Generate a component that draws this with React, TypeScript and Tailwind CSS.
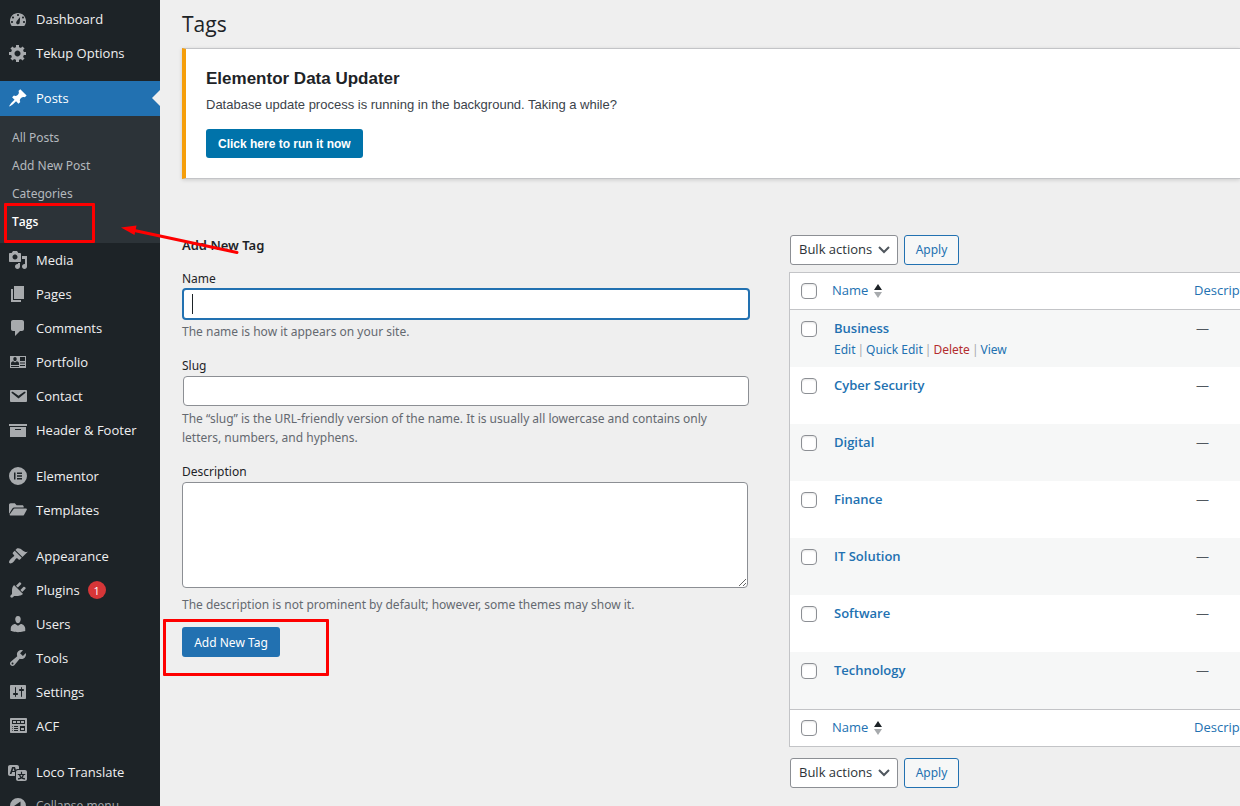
import type { ReactNode } from "react";

const icons: Record<string, ReactNode> = {
  dashboard: (
    <path fillRule="evenodd" d="M3.76 17h12.48c1.1-1.37 1.76-3.11 1.76-5 0-4.42-3.58-8-8-8s-8 3.58-8 8c0 1.89.66 3.63 1.76 5zM9 6c0-.55.45-1 1-1s1 .45 1 1c0 .56-.45 1-1 1s-1-.44-1-1zM4 8.500c0-.55.45-1 1-1s1 .45 1 1c0 .56-.45 1-1 1s-1-.44-1-1zm10 0c0-.55.45-1 1-1s1 .45 1 1c0 .56-.45 1-1 1s-1-.44-1-1zM8.700 12.200c.6-.6 3.400-4.200 3.400-4.200s-.1 5.200-.5 6.200c-.5 1.100-1.800 1.500-2.700.9-.9-.6-1-2-.2-2.900zM3 13c0-.55.45-1 1-1s1 .45 1 1c0 .56-.45 1-1 1s-1-.44-1-1zm12 0c0-.55.45-1 1-1s1 .45 1 1c0 .56-.45 1-1 1s-1-.44-1-1z" />
  ),
  options: (
    <path fillRule="evenodd" d="M18 12h-2.18c-.17.7-.44 1.35-.81 1.93l1.54 1.54-2.1 2.1-1.54-1.54c-.58.36-1.23.63-1.91.79V19H8v-2.18c-.68-.16-1.33-.43-1.91-.79l-1.54 1.54-2.12-2.12 1.54-1.54c-.36-.58-.63-1.23-.79-1.91H1V9.03h2.17c.16-.7.44-1.35.8-1.94L2.43 5.55l2.1-2.1 1.54 1.54c.58-.37 1.24-.64 1.93-.81V2h3v2.18c.68.16 1.33.43 1.91.79l1.54-1.54 2.12 2.12-1.54 1.54c.36.59.64 1.24.8 1.94H18V12zm-8.5 1.5c1.66 0 3-1.34 3-3s-1.34-3-3-3-3 1.34-3 3 1.34 3 3 3z" />
  ),
  posts: (
    <path d="M10.44 3.02l1.82-1.82 6.36 6.35-1.83 1.82c-1.05-.68-2.48-.57-3.41.36l-.75.75c-.92.93-1.04 2.35-.35 3.41l-1.83 1.82-2.41-2.41-2.8 2.79c-.42.42-3.38 2.71-3.8 2.29s1.86-3.39 2.28-3.81l2.79-2.79L4.1 9.36l1.83-1.82c1.05.69 2.48.57 3.4-.36l.75-.75c.93-.92 1.05-2.35.36-3.41z" />
  ),
  media: (
    <path fillRule="evenodd" d="M13 11V4c0-.55-.45-1-1-1h-1.67L9 1H5L3.67 3H2c-.55 0-1 .45-1 1v7c0 .55.45 1 1 1h10c.55 0 1-.45 1-1zM7 4.5c1.38 0 2.5 1.12 2.5 2.5S8.38 9.5 7 9.5 4.5 8.38 4.5 7 5.62 4.5 7 4.5zM14 6h5v10.5c0 1.38-1.12 2.5-2.5 2.5S14 17.88 14 16.5s1.12-2.5 2.5-2.5c.17 0 .34.02.5.05V9h-3V6zm-4 8.05V13h2v3.5c0 1.38-1.12 2.5-2.5 2.5S7 17.88 7 16.5 8.12 14 9.5 14c.17 0 .34.02.5.05z" />
  ),
  pages: <path d="M6 15V2h10v13H6zm-1 1h8v2H3V5h2v11z" />,
  comments: (
    <path d="M5 2h9c1.1 0 2 .9 2 2v7c0 1.1-.9 2-2 2h-2l-5 5v-5H5c-1.1 0-2-.9-2-2V4c0-1.1.9-2 2-2z" />
  ),
  portfolio: (
    <path fillRule="evenodd" d="M2 4h16v12H2V4zm10 1v4h5V5h-5zM7 5C5.900 5 5.300 5.900 5.300 6.900S6 9 7 9s1.700-1.100 1.700-2.100S8.100 5 7 5zM3 13h8v-1.500c0-1.200-1-2.200-2.200-2.200L7 10.600 5.200 9.300C4 9.300 3 10.300 3 11.500V13zm9-2.500v1h5v-1h-5zm0 2.500v1h5v-1h-5zM3 14v1h8v-1H3z" />
  ),
  contact: (
    <path fillRule="evenodd" d="M2.900 4h15.200c.6 0 .9.300.9.900v10.200c0 .6-.3.900-.9.900H2.900c-.6 0-.9-.3-.9-.9V4.900c0-.6.300-.9.900-.9zm7.600 8.600l6.740-5.530c.24-.2.430-.66.130-1.070-.29-.41-.82-.42-1.170-.17l-5.700 3.860L4.800 5.830c-.35-.25-.88-.24-1.170.17-.3.410-.11.870.13 1.070z" />
  ),
  header: <path fillRule="evenodd" d="M19 4v2H1V4h18zM2 7h16v10H2V7zm11 3V9H7v1h6z" />,
  elementor: (
    <path fillRule="evenodd" d="M10 1a9 9 0 1 0 0 18 9 9 0 0 0 0-18zM6 6.500h1.500v7H6v-7zM9 6.500h5V8H9V6.500zm0 2.750h5v1.500H9v-1.500zM9 12h5v1.500H9V12z" />
  ),
  templates: (
    <path d="M1 14V5c0-1 .6-1.700 1.600-1.700h4.200L8.600 5.200h5.600c.9 0 1.500.6 1.500 1.500v.8H6.400c-1 0-1.700.4-2.200 1.200L1 14zm4.300-4.600c.3-.5.700-.8 1.300-.8H18c.8 0 1.100.6.8 1.200l-2.700 4.900c-.3.600-.8.900-1.400.9H2.400c-.7 0-1-.6-.7-1.200l3.600-5z" />
  ),
  appearance: (
    <path d="M14.480 11.060L7.410 3.990l1.500-1.500c.5-.56 2.300-.47 3.510.32 1.210.8 1.430 1.280 2.910 2.100 1.180.64 2.450 1.260 4.450.85zm-.71.71L6.700 4.700 4.930 6.470c-.39.39-.39 1.020 0 1.410l1.060 1.060c.39.39.39 1.030 0 1.420-.6.600-1.430 1.110-2.210 1.690-.35.26-.7.530-1.010.84C1.430 14.230.4 16.080 1.400 17.070c.99 1 2.840-.03 4.180-1.360.31-.31.580-.66.850-1.020.57-.78 1.080-1.610 1.690-2.210.39-.39 1.020-.39 1.410 0l1.060 1.060c.39.39 1.020.39 1.410 0z" />
  ),
  plugins: (
    <path d="M13.110 4.360L9.870 7.600 8 5.730l3.240-3.240c.35-.34 1.050-.2 1.560.32.52.51.66 1.210.31 1.550zm-8 1.770l.91-1.120 9.010 9.010-1.190.84c-.71.71-2.630 1.160-3.820 1.160H6.140L4.900 17.260c-.59.59-1.540.59-2.120 0-.59-.58-.59-1.530 0-2.120l1.240-1.240v-3.880c0-1.130.4-3.190 1.090-3.890zm7.260 3.970l3.240-3.240c.34-.35 1.040-.21 1.550.31.52.51.66 1.210.31 1.550l-3.240 3.250z" />
  ),
  users: (
    <path d="M10 9.250c-2.270 0-2.730-3.440-2.730-3.440C7 4.020 7.820 2 9.970 2c2.160 0 2.980 2.020 2.710 3.810 0 0-.41 3.440-2.680 3.440zm0 2.570L12.720 10c2.390 0 4.520 2.330 4.520 4.530v2.490s-3.650 1.130-7.240 1.130c-3.650 0-7.240-1.130-7.240-1.130v-2.490c0-2.250 1.940-4.480 4.470-4.480z" />
  ),
  tools: (
    <path fillRule="evenodd" d="M16.680 9.770c-1.340 1.340-3.300 1.670-4.950.99l-5.410 6.520c-.99.99-2.590.99-3.580 0s-.99-2.590 0-3.570l6.520-5.420c-.68-1.650-.35-3.610.99-4.950 1.280-1.280 3.120-1.620 4.720-1.060l-2.890 2.890 2.820 2.820 2.860-2.870c.53 1.580.18 3.390-1.080 4.650zM3.810 16.210c.4.39 1.040.39 1.430 0 .4-.4.4-1.040 0-1.430-.39-.4-1.030-.4-1.430 0-.39.39-.39 1.030 0 1.430z" />
  ),
  settings: (
    <path fillRule="evenodd" d="M18 16V4c0-.55-.45-1-1-1H3c-.55 0-1 .45-1 1v12c0 .55.45 1 1 1h14c.55 0 1-.45 1-1zM8 11h1c.55 0 1 .45 1 1s-.45 1-1 1H8v1.500c0 .28-.22.5-.5.5s-.5-.22-.5-.5V13H6c-.55 0-1-.45-1-1s.45-1 1-1h1V5.500c0-.28.22-.5.5-.5s.5.220.5.500V11zm5-2h-1c-.55 0-1-.45-1-1s.45-1 1-1h1V5.500c0-.28.22-.5.5-.5s.5.220.5.500V7h1c.55 0 1 .45 1 1s-.45 1-1 1h-1v5.500c0 .28-.22.5-.5.5s-.5-.22-.5-.5V9z" />
  ),
  acf: (
    <path fillRule="evenodd" d="M19 16V3c0-.55-.45-1-1-1H3c-.55 0-1 .45-1 1v13c0 .55.45 1 1 1h15c.55 0 1-.45 1-1zM4 4h13v4H4V4zm1 1v2h3V5H5zm4 0v2h3V5H9zm4 0v2h3V5h-3zm-8.500 5c.28 0 .5.220.5.500s-.22.500-.5.500-.5-.22-.5-.5.220-.5.500-.5zM6 10h4v1H6v-1zm6 0h5v5h-5v-5zm1 2v2h3v-2h-3zm-8.500 0c.28 0 .5.220.5.500s-.22.500-.5.500-.5-.22-.5-.5.220-.5.500-.5zM6 12h4v1H6v-1zm-1.500 2c.28 0 .5.220.5.500s-.22.500-.5.500-.5-.22-.5-.5.220-.5.500-.5zM6 14h4v1H6v-1z" />
  ),
  translate: (
    <path fillRule="evenodd" d="M11 7H9.490c-.63 0-1.250.3-1.590.7L7 5H4.130l-2.390 7h1.690l.74-2H7v4H2c-1.100 0-2-.9-2-2V5c0-1.100.9-2 2-2h7c1.100 0 2 .9 2 2v2zM6.510 9H4.490l1-2.930zM10 8h7c1.100 0 2 .9 2 2v7c0 1.100-.9 2-2 2h-7c-1.100 0-2-.9-2-2v-7c0-1.100.9-2 2-2zm7.250 5v-1.080h-3.170V9.750h-1.160v2.170H9.750V13h1.280c.11.850.560 1.850 1.280 2.620-.87.360-1.890.620-2.310.620-.01.020.220.970.200 1.460.840 0 2.210-.5 3.280-1.150 1.090.650 2.480 1.150 3.340 1.150-.02-.49.200-1.440.200-1.460-.43 0-1.490-.27-2.380-.63.700-.77 1.140-1.770 1.250-2.610h1.360zm-3.810 1.930c-.5-.46-.85-1.130-1.010-1.930h2.090c-.17.800-.51 1.470-1 1.930l-.04.030s-.03-.02-.04-.03z" />
  ),
  collapse: (
    <path fillRule="evenodd" d="M10 2a8 8 0 1 0 0 16 8 8 0 0 0 0-16zM12.500 5.500v9L6 10l6.500-4.500z" />
  ),
};

function MenuIcon({ name }: { name: string }) {
  return (
    <svg viewBox="0 0 20 20" className="mr-2 ml-2 size-5 shrink-0" fill="currentColor" aria-hidden="true">
      {icons[name]}
    </svg>
  );
}

type Item = { icon: string; label: string; badge?: string };

function MenuItem({ item }: { item: Item }) {
  return (
    <li>
      <a href="#" className="flex h-[34px] items-center whitespace-nowrap text-[#f0f0f1]">
        <span className="text-[#a7aaad]">
          <MenuIcon name={item.icon} />
        </span>
        {item.label}
        {item.badge && (
          <span className="ml-2 flex size-[18px] items-center justify-center rounded-full bg-[#d63638] text-[11px] leading-none text-white">
            {item.badge}
          </span>
        )}
      </a>
    </li>
  );
}

const groups: Item[][] = [
  [
    { icon: "media", label: "Media" },
    { icon: "pages", label: "Pages" },
    { icon: "comments", label: "Comments" },
    { icon: "portfolio", label: "Portfolio" },
    { icon: "contact", label: "Contact" },
    { icon: "header", label: "Header & Footer" },
  ],
  [
    { icon: "elementor", label: "Elementor" },
    { icon: "templates", label: "Templates" },
  ],
  [
    { icon: "appearance", label: "Appearance" },
    { icon: "plugins", label: "Plugins", badge: "1" },
    { icon: "users", label: "Users" },
    { icon: "tools", label: "Tools" },
    { icon: "settings", label: "Settings" },
    { icon: "acf", label: "ACF" },
  ],
];

function Sidebar() {
  return (
    <nav className="w-40 shrink-0 bg-[#1d2327] pt-0.5 text-[13px] leading-[18px]">
      <ul>
        <MenuItem item={{ icon: "dashboard", label: "Dashboard" }} />
        <MenuItem item={{ icon: "options", label: "Tekup Options" }} />
      </ul>
      <a href="#" className="mt-[11px] flex h-[35px] items-center bg-[#2271b1] pb-px text-white">
        <MenuIcon name="posts" />
        Posts
        <svg viewBox="0 0 8 16" className="ml-auto h-4 w-2" fill="#efefef" aria-hidden="true">
          <path d="M8 0v16L0 8z" />
        </svg>
      </a>
      <ul className="bg-[#2c3338] pt-2 pb-[7px] text-[12px] text-[#b4b9be]">
        {["All Posts", "Add New Post", "Categories"].map((label) => (
          <li key={label}>
            <a href="#" className="flex h-7 items-center px-3 font-['Noto_Sans','Open_Sans',sans-serif]">
              {label}
            </a>
          </li>
        ))}
        <li className="relative">
          <a href="#" className="flex h-7 items-center px-3 font-semibold text-white">
            Tags
          </a>
          <span className="pointer-events-none absolute -top-[5px] left-1 h-10 w-[91px] rounded-[1px] border-3 border-[#fe0000]" />
          <svg viewBox="0 0 120 30" className="pointer-events-none absolute top-4 left-[120px] z-10 h-[30px] w-[120px]" aria-hidden="true">
            <path d="M12 6L117 28.500" stroke="#fe0000" strokeWidth="3" strokeLinecap="round" />
            <path d="M1 3.500L16.500 1.500L14.500 11z" fill="#fe0000" />
          </svg>
        </li>
      </ul>
      {groups.map((group, i) => (
        <ul key={i} className="mb-3">
          {group.map((item) => (
            <MenuItem key={item.label} item={item} />
          ))}
        </ul>
      ))}
      <ul>
        <MenuItem item={{ icon: "translate", label: "Loco Translate" }} />
      </ul>
      <button className="flex h-[34px] items-center text-[12px] text-[#a7aaad]">
        <MenuIcon name="collapse" />
        Collapse menu
      </button>
    </nav>
  );
}

function BulkActions() {
  return (
    <div className="ml-px flex gap-1.5">
      <div className="relative">
        <select
          aria-label="Select bulk action"
          className="h-[30px] w-[108px] appearance-none rounded-[3px] border border-[#8c8f94] bg-white pl-2 text-[13px] text-[#2c3338]"
        >
          <option>Bulk actions</option>
          <option>Delete</option>
        </select>
        <svg viewBox="0 0 12 8" className="pointer-events-none absolute top-[11px] right-2 h-2 w-3" fill="none" stroke="#50575e" strokeWidth="2" aria-hidden="true">
          <path d="M1 1l5 5 5-5" />
        </svg>
      </div>
      <button className="h-[30px] w-[55px] rounded-[3px] border border-[#2271b1] bg-[#f6f7f7] font-['Noto_Sans','Open_Sans',sans-serif] text-[12px] text-[#2271b1]">
        Apply
      </button>
    </div>
  );
}

function Check({ label }: { label: string }) {
  return (
    <input
      type="checkbox"
      aria-label={label}
      className="block size-4 appearance-none rounded-[4px] border border-[#8c8f94] bg-white shadow-[inset_0_1px_2px_rgba(0,0,0,0.1)]"
    />
  );
}

function HeadCells() {
  return (
    <>
      <th className="h-[37px] pl-[11px] text-left align-middle">
        <Check label="Select all" />
      </th>
      <th className="text-left align-middle font-normal">
        <a href="#" className="flex items-center gap-1.5 text-[13px]">
          Name
          <svg viewBox="0 0 8 16" className="h-4 w-2" aria-hidden="true">
            <path d="M4 1l4 6H0z" fill="#1d2327" />
            <path d="M4 15l4-6H0z" fill="#a7aaad" />
          </svg>
        </a>
      </th>
      <th className="overflow-hidden text-left align-middle text-[13px] font-normal whitespace-nowrap">
        <a href="#">Description</a>
      </th>
    </>
  );
}

const tags = ["Business", "Cyber Security", "Digital", "Finance", "IT Solution", "Software", "Technology"];

function TagTable() {
  return (
    <table className="mt-[7px] mb-[11px] w-full table-fixed border-separate border-spacing-0 border-y border-l border-[#c3c4c7] bg-white text-[#2271b1]">
      <colgroup>
        <col className="w-[42px]" />
        <col />
        <col className="w-[46px]" />
      </colgroup>
      <thead>
        <tr className="[&>th]:border-b [&>th]:border-[#c3c4c7]">
          <HeadCells />
        </tr>
      </thead>
      <tbody>
        {tags.map((tag, i) => (
          <tr key={tag} className="h-[57px] align-top odd:bg-[#f6f7f7]">
            <td className="pt-[11px] pl-[11px]">
              <Check label={`Select ${tag}`} />
            </td>
            <td className="pt-2 pl-0.5">
              <a href="#" className="block text-[13px] leading-5 font-semibold">
                {tag}
              </a>
              {i === 0 && (
                <div className="mt-0.5 flex gap-0.5 font-['Noto_Sans','Open_Sans',sans-serif] text-[12px] leading-[19px] whitespace-nowrap text-[#a7aaad]">
                  <a href="#" className="text-[#2271b1]">Edit</a>|
                  <a href="#" className="text-[#2271b1]">Quick Edit</a>|
                  <a href="#" className="text-[#b32d2e]">Delete</a>|
                  <a href="#" className="text-[#2271b1]">View</a>
                </div>
              )}
            </td>
            <td className="pt-2 pl-0.5 text-[13px] leading-5 text-[#50575e]">—</td>
          </tr>
        ))}
      </tbody>
      <tfoot>
        <tr className="[&>th]:border-t [&>th]:border-[#c3c4c7]">
          <HeadCells />
        </tr>
      </tfoot>
    </table>
  );
}

function TagForm() {
  return (
    <form className="font-['Noto_Sans','Open_Sans',sans-serif] text-[12px] leading-[19px] text-[#646970]" onSubmit={(e) => e.preventDefault()}>
      <h2 className="text-[13px] leading-5 font-semibold text-[#1d2327]">Add New Tag</h2>
      <div className="mt-3.5">
        <label htmlFor="tag-name" className="block text-[#1d2327]">Name</label>
        <div className="relative">
          <input id="tag-name" type="text" className="block h-8 w-full rounded-[4px] border-2 border-[#2271b1] bg-white px-2 text-[13px] text-[#2c3338] outline-none" />
          <span className="pointer-events-none absolute top-1.5 left-2.5 h-5 w-px bg-[#1d2327]" />
        </div>
        <p className="mt-0.5 max-w-[95%]">The name is how it appears on your site.</p>
      </div>
      <div className="mt-[15px]">
        <label htmlFor="tag-slug" className="block text-[#1d2327]">Slug</label>
        <div className="p-px">
          <input id="tag-slug" type="text" className="block h-[30px] w-full rounded-[4px] border border-[#8c8f94] bg-white px-2 text-[13px] text-[#2c3338]" />
        </div>
        <p className="mt-0.5 max-w-[95%]">
          The “slug” is the URL-friendly version of the name. It is usually all lowercase and contains only letters, numbers, and hyphens.
        </p>
      </div>
      <div className="mt-[15px]">
        <label htmlFor="tag-description" className="block text-[#1d2327]">Description</label>
        <div className="pt-px pr-0.5">
          <textarea id="tag-description" className="block h-[106px] w-full rounded-[4px] border border-[#8c8f94] bg-white px-2 text-[13px] text-[#2c3338]" />
        </div>
        <p className="mt-[7px] max-w-[95%]">The description is not prominent by default; however, some themes may show it.</p>
      </div>
      <div className="relative mt-[13px] w-fit">
        <button type="submit" className="block h-[30px] w-[98px] rounded-[3px] bg-[#2271b1] text-[12px] whitespace-nowrap text-white">
          Add New Tag
        </button>
        <span className="pointer-events-none absolute -top-2 -left-[19px] h-[57px] w-[166px] rounded-[1px] border-3 border-[#fe0000]" />
      </div>
    </form>
  );
}

export default function App() {
  return (
    <div className="flex h-screen overflow-hidden bg-[#efefef] font-['Open_Sans','Noto_Sans',sans-serif]">
      <Sidebar />
      <main className="min-w-0 flex-1 pl-[22px]">
        <h1 className="pt-2 pb-2 text-[21px] leading-8 text-[#1d2327]">Tags</h1>
        <section className="border-y border-l-4 border-y-[#c3c4c7] border-l-[#f59e0b] bg-white pt-[19px] pb-5 pl-5 font-['Liberation_Sans',Arial,sans-serif] shadow-[0_1px_4px_rgba(0,0,0,0.15)]">
          <h3 className="text-[17px] leading-[22px] font-bold text-[#1d2327]">Elementor Data Updater</h3>
          <p className="mt-1.5 text-[13px] leading-[18px] text-[#3c434a]">
            Database update process is running in the background. Taking a while?
          </p>
          <button className="mt-[15px] block h-[29px] rounded-[3px] bg-[#0073aa] px-3 text-[12px] font-bold text-white">Click here to run it now</button>
        </section>
        <div className="mt-14 grid grid-cols-[minmax(0,568fr)_minmax(0,451fr)] gap-[39px]">
          <TagForm />
          <div>
            <BulkActions />
            <TagTable />
            <BulkActions />
          </div>
        </div>
      </main>
    </div>
  );
}
